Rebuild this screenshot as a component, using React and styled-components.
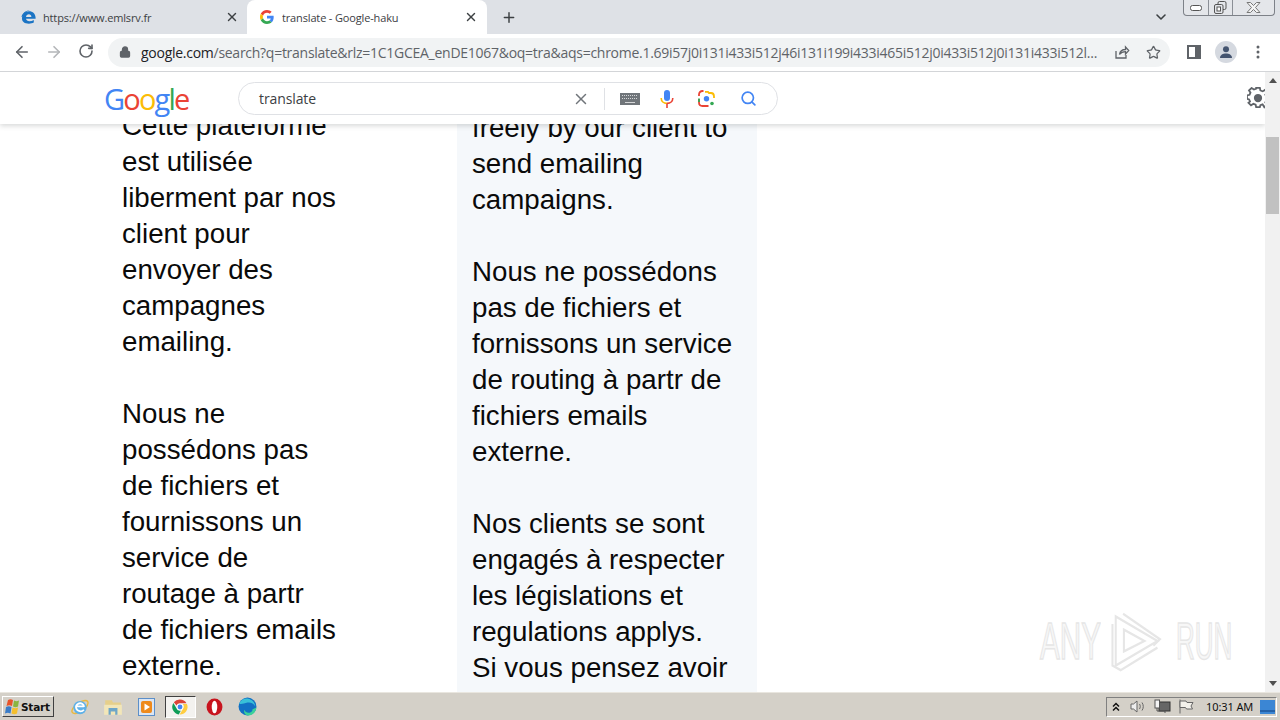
import React from "react";
import styled, { createGlobalStyle } from "styled-components";
import { ArrowLeft, ArrowRight, RotateCw, Lock, Star, X, Plus, ChevronDown, Search } from "lucide-react";

const Global = createGlobalStyle`
  html, body { margin: 0; padding: 0; background: #fff; overflow: hidden; }
  #root { width: 1280px; height: 720px; }
`;

const Screen = styled.div`
  width: 1280px; height: 720px; display: flex; flex-direction: column; overflow: hidden; position: relative;
  font-family: "Open Sans", "Liberation Sans", sans-serif;
`;

const TabStrip = styled.div`
  height: 34px; flex: none; background: #dee1e6; display: flex; align-items: stretch; padding-left: 8px; box-sizing: border-box;
`;
const Tab = styled.div`
  width: ${p => p.$w}px; margin-right: ${p => p.$mr || 0}px; flex: none; display: flex; align-items: center; box-sizing: border-box;
  padding-left: ${p => p.$pl}px; padding-right: ${p => p.$pr}px; border-radius: 8px 8px 0 0; background: ${p => p.$active ? "#fff" : "transparent"};
  color: #3c4043; font-size: 11px; letter-spacing: -0.15px; white-space: nowrap;
`;
const TabIcon = styled.span`
  width: 16px; height: 16px; display: flex; align-items: center; justify-content: center; margin-right: ${p => p.$mr}px; flex: none;
`;
const TabTitle = styled.span`
  flex: 1; overflow: hidden;
`;
const NewTab = styled.div`
  width: 16px; display: flex; align-items: center; justify-content: center; margin-left: 14px; color: #3c4043;
`;
const StripRight = styled.div`
  margin-left: auto; display: flex; align-items: flex-start; 
`;
const ListTabs = styled.div`
  margin-top: 9px; margin-right: 14px; color: #3c4043; display: flex;
`;
const WinControls = styled.div`
  width: 92px; height: 16px; margin-right: 5px; display: grid; grid-template-columns: 25px 24px 1fr; box-sizing: border-box;
  border: 1px solid #7d8188; border-top: none; border-radius: 0 0 4px 4px; background: #e4e6ea;
`;
const WinButton = styled.div`
  display: flex; align-items: center; justify-content: center; border-right: ${p => p.$last ? "none" : "1px solid #8b8f96"};
`;

const Toolbar = styled.div`
  height: 38px; flex: none; background: #fff; border-bottom: 1px solid #d3d5d8; box-sizing: border-box; display: flex; align-items: center; padding-bottom: 1px;
`;
const NavButton = styled.div`
  width: 32px; display: flex; justify-content: center; color: ${p => p.$off ? "#b4b6b9" : "#5f6368"}; flex: none;
`;
const NavGroup = styled.div`
  display: flex; padding-left: 6px; 
`;
const Omnibox = styled.div`
  margin-left: 6px; width: 1062px; height: 29px; flex: none; background: #f1f3f4; border-radius: 15px; display: flex; align-items: center; padding-left: 11px; box-sizing: border-box;
`;
const Url = styled.div`
  margin-left: 10px; width: 958px; font-size: 14px; letter-spacing: -0.27px; white-space: nowrap; overflow: hidden; color: #5f6368; flex: none;
  b { font-weight: 400; color: #202124; }
`;
const OmniIcon = styled.span`
  display: flex; color: #5f6368; margin-left: ${p => p.$ml}px; flex: none;
`;
const ProfileDot = styled.span`
  width: 22px; height: 22px; border-radius: 50%; background: #d5d9e0; display: flex; align-items: center; justify-content: center; overflow: hidden;
`;
const ToolEnd = styled.div`
  display: flex; align-items: center; margin-left: 17px;
`;

const Main = styled.div`
  flex: 1; min-height: 0; display: flex;
`;
const PageArea = styled.div`
  flex: 1; min-width: 0; display: flex; flex-direction: column; overflow: hidden; 
`;
const SearchHeader = styled.div`
  height: 52px; flex: none; background: #fff; box-shadow: 0 2px 5px rgba(60,64,67,.2); position: relative; z-index: 2; display: flex; align-items: center; padding-left: 104px; box-sizing: border-box; overflow: hidden;
`;
const Logo = styled.div`
  width: 134px; flex: none; font-family: "Open Sans", sans-serif; font-weight: 500; font-size: 29px; letter-spacing: -1.800px; line-height: 1; margin-top: 1px;
`;
const Letter = styled.span`
  color: ${p => p.$c};
`;
const SearchBox = styled.div`
  width: 540px; height: 33px; margin-top: 1px; flex: none; border: 1px solid #dfe1e5; border-radius: 17px; box-sizing: border-box; display: flex; align-items: center; padding-left: 20px; background: #fff;
`;
const Query = styled.div`
  width: 305px; flex: none; font-size: 14px; letter-spacing: -0.1px; color: #3c4043; 
`;
const BoxIcon = styled.span`
  display: flex; flex: none; margin-left: ${p => p.$ml}px; color: ${p => p.$c || "#70757a"};
`;
const BoxDivider = styled.span`
  width: 1px; height: 22px; background: #dfe1e5; flex: none; margin-left: 14px;
`;
const Gear = styled.span`
  display: flex; flex: none; margin-left: 469px; color: #5f6368;
`;

const Columns = styled.div`
  flex: 1; min-height: 0; display: flex; align-items: flex-start; background: #fff; overflow: hidden;
`;
const LeftCol = styled.div`
  width: 457px; flex: none; box-sizing: border-box; padding-left: 122px; margin-top: -16px;
`;
const RightCol = styled.div`
  width: 300px; height: 600px; flex: none; box-sizing: border-box; padding-left: 15px; margin-top: -14px; background: #f5f8fb;
`;
const Line = styled.div`
  font-family: "Liberation Sans", Arial, sans-serif; font-size: 27.700px; line-height: 36px; height: 36px; color: #0a0a0a; white-space: nowrap;
`;

const Scrollbar = styled.div`
  width: 15px; flex: none; background: #f1f1f1; display: flex; flex-direction: column; align-items: center; position: relative; z-index: 3; justify-content: space-between; padding: 6px 0; box-sizing: border-box;
`;
const Thumb = styled.div`
  position: absolute; top: 65px; left: 1px; width: 13px; height: 77px; background: #c1c1c1;
`;

const Taskbar = styled.div`
  height: 28px; flex: none; background: #d4d0c8; border-top: 1px solid #e9e6df; box-sizing: border-box; display: flex; align-items: center; position: relative; z-index: 4;
`;
const StartButton = styled.div`
  width: 52px; height: 21px; margin-left: 2px; flex: none; box-sizing: border-box; display: flex; align-items: center; gap: 0; padding-left: 1px;
  border: 1px solid; border-color: #fff #404040 #404040 #fff; background: #d4d0c8; font-family: "DejaVu Sans", sans-serif; font-weight: 700; font-size: 10.500px; color: #111; letter-spacing: -0.2px;
`;
const QuickLaunch = styled.div`
  display: flex; align-items: center; margin-left: 9px;
`;
const Launch = styled.div`
  width: 33.500px; height: 22px; display: flex; align-items: center; justify-content: center; flex: none; box-sizing: border-box;
  ${p => p.$active && `background:#f3f2ef; border:1px solid; border-color:#404040 #fff #fff #404040; width:31px; margin:0 2px 0 1px;`}
`;
const Tray = styled.div`
  margin-left: auto; margin-right: 3px; width: 171px; height: 20px; box-sizing: border-box; flex: none; display: flex; align-items: center; border: 1px solid; border-color: #808080 #fff #fff #808080; padding-left: 5px;
`;
const TrayIcon = styled.span`
  display: flex; margin-left: ${p => p.$ml || 0}px; flex: none;
`;
const Clock = styled.span`
  font-family: "Noto Sans", sans-serif; font-size: 11px; color: #111; margin-left: 11px; white-space: nowrap; flex: none; letter-spacing: -0.1px;
`;

const Watermark = styled.div`
  position: absolute; left: 1040px; top: 608px; display: flex; align-items: center; height: 66px; pointer-events: none; z-index: 1;
`;
const MarkText = styled.span`
  font-family: "Liberation Sans", sans-serif; font-size: 52px; transform: scaleX(${p => p.$sx}); transform-origin: left center; color: #f7f7f7;
  -webkit-text-stroke: 1.500px #e6e6e6; width: ${p => p.$w}px; flex: none; display: block; line-height: 1;
`;
const PlayWrap = styled.span`
  display: flex; flex: none; margin-right: 12px;
`;

const GIcon = ({ s = 14 }) => (
  <svg width={s} height={s} viewBox="0 0 48 48">
    <path fill="#EA4335" d="M24 9.500c3.500 0 6.600 1.200 9.100 3.600l6.800-6.800C35.800 2.400 30.400 0 24 0 14.600 0 6.500 5.400 2.600 13.200l7.900 6.200C12.400 13.600 17.700 9.500 24 9.500z"/>
    <path fill="#4285F4" d="M46.900 24.500c0-1.600-.1-3.100-.4-4.500H24v9h12.900c-.6 3-2.200 5.500-4.800 7.200l7.700 6c4.500-4.200 7.100-10.300 7.100-17.700z"/>
    <path fill="#FBBC05" d="M10.500 28.600c-.5-1.400-.8-3-.8-4.600s.3-3.200.8-4.600l-7.900-6.200C.9 16.500 0 20.100 0 24s.9 7.500 2.600 10.800l7.900-6.200z"/>
    <path fill="#34A853" d="M24 48c6.500 0 11.900-2.100 15.900-5.800l-7.700-6c-2.200 1.400-4.900 2.300-8.200 2.300-6.300 0-11.600-4.200-13.500-9.900l-7.900 6.200C6.500 42.600 14.600 48 24 48z"/>
  </svg>
);
const EdgeTabIcon = () => (
  <svg width="16" height="14" viewBox="0 0 16 14">
    <path fill="#1b74c4" d="M1 8.500C1 4 4 1.200 8 1.200c3.800 0 6.600 2.600 6.600 6.600v1H5c.3 1.700 1.600 2.400 3.400 2.400 1.600 0 3-.4 4.400-1.200v2.600c-1.400.8-3 1.100-4.900 1.100C3.600 13.700 1 11.800 1 8.500zm4-1.600h5.400C10.300 5.300 9.400 4.200 7.900 4.200 6.300 4.200 5.300 5.300 5 6.900z"/>
    <path fill="#1b74c4" d="M.4 7C1.500 3 5 .3 9 .6 6 1 3 3 1.600 6.500z"/>
  </svg>
);
const SharedIcon = () => (
  <svg width="16" height="16" viewBox="0 0 16 16" fill="none" stroke="#5f6368" strokeWidth="1.300">
    <path d="M2 7v7h10v-3" />
    <path d="M5.500 10.500c.5-3 2.600-5 6-5V3l3.200 3.600L11.500 10V7.600c-2.500 0-4.600.8-6 2.900z" />
  </svg>
);
const SidePanel = () => (
  <svg width="14" height="14" viewBox="0 0 14 14">
    <path fill="#5f6368" fillRule="evenodd" d="M0 0h14v14H0zM2 2v10h6V2z" />
  </svg>
);
const Person = () => (
  <svg width="16" height="16" viewBox="0 0 16 16" fill="#44546f">
    <circle cx="8" cy="5.200" r="3" />
    <path d="M2 14c0-3 3-4.400 6-4.400s6 1.400 6 4.400z" />
  </svg>
);
const Kebab = () => (
  <svg width="4" height="14" viewBox="0 0 4 14" fill="#5f6368">
    <circle cx="2" cy="2" r="1.500" /><circle cx="2" cy="7" r="1.500" /><circle cx="2" cy="12" r="1.500" />
  </svg>
);
const Keyboard = () => (
  <svg width="20" height="12" viewBox="0 0 20 12">
    <rect width="20" height="12" fill="#70757a" />
    <path stroke="#d5d6d8" strokeWidth="1" strokeDasharray="1 1" d="M2 2.500h16M2 5.500h16" />
    <path stroke="#d5d6d8" strokeWidth="1" d="M5 9.500h10" />
  </svg>
);
const Mic = () => (
  <svg width="14" height="18" viewBox="0 0 14 18" fill="none">
    <rect x="4" y="0" width="6" height="11" rx="3" fill="#4285f4" />
    <path d="M1.200 8c0 3.300 2.400 5.400 5.800 5.400" stroke="#fbbc05" strokeWidth="1.600" />
    <path d="M12.800 8c0 3.300-2.400 5.400-5.800 5.400" stroke="#ea4335" strokeWidth="1.600" />
    <path d="M7 13.400V18" stroke="#ea4335" strokeWidth="1.600" />
  </svg>
);
const LensIcon = () => (
  <svg width="17" height="17" viewBox="0 0 17 17" fill="none" strokeWidth="1.800">
    <path d="M1 6V4.500C1 2.500 2.500 1 4.500 1H5.500" stroke="#ea4335" />
    <path d="M7 1.800L10 1.800L11 3H13C14.500 3 16 4 16 6.500V8" stroke="#fbbc05" />
    <path d="M1 9v3.500C1 14.500 2.500 16 4.500 16h6" stroke="#ea4335" />
    <path d="M1 8.500v3.500" stroke="#34a853" />
    <circle cx="8.500" cy="8.800" r="2.700" fill="#4285f4" stroke="none" />
    <circle cx="14" cy="13.500" r="1.800" fill="#34a853" stroke="none" />
  </svg>
);
const GearIcon = () => (
  <svg width="22" height="22" viewBox="0 0 24 24" fill="none" stroke="#5f6368" strokeWidth="2">
    <path d="M10 2h4l.6 3 2.400 1 2.600-1.700 2.800 2.800L20 9.700l1 2.300 3 .6v3l-3 .6-1 2.400 1.700 2.600-2.800 2.800L17 20.800l-2.400 1L14 24h-4l-.6-2.800-2.400-1-2.600 1.700-2.800-2.800L3.300 17.500l-1-2.400L0 14.500v-4l2.800-.6 1-2.400L2.200 5l2.800-2.800 2.600 1.700L10 3z" transform="translate(0 -1) scale(1 .96)"/>
    <circle cx="12" cy="12" r="3.500" fill="#5f6368" />
  </svg>
);
const MinIcon = () => <svg width="12" height="6" viewBox="0 0 12 6"><rect x=".5" y=".5" width="11" height="5" rx="2" fill="#fff" stroke="#555" /></svg>;
const RestoreIcon = () => (
  <svg width="13" height="13" viewBox="0 0 13 13" fill="#e4e6ea" stroke="#555">
    <rect x="4" y=".5" width="8" height="8" rx="1.500" /><rect x=".5" y="3.500" width="8.500" height="9" rx="1.500" /><rect x="3" y="6" width="3.500" height="4" fill="#fff" />
  </svg>
);
const CloseGlyph = () => (
  <svg width="15" height="11" viewBox="0 0 15 11" fill="#f4f4f4" stroke="#777">
    <path d="M1 .5h3.500l3 3 3-3H14l-4.500 5L14 10.500h-3.500l-3-3-3 3H1l4.500-5z" />
  </svg>
);
const WinFlag = () => (
  <svg width="17" height="16" viewBox="0 0 17 16">
    <path fill="#e8542a" d="M4 1c2-1 3-1 5 0L8 7C6 6 4.500 6 2.500 7z"/>
    <path fill="#8ab53f" d="M10 1.500c2 1 3 1 5 0l-1 6c-2 1-3 1-5 0z"/>
    <path fill="#3a7cc8" d="M2 8c2-1 3.500-1 5.500 0L6.500 14.500c-2-1-3.500-1-5.500 0z"/>
    <path fill="#f5bf2c" d="M8.500 8.500c2 1 3.500 1 5.500 0l-1 6c-2 1-3.500 1-5.500 0z"/>
  </svg>
);
const IEIcon = () => (
  <svg width="20" height="20" viewBox="0 0 18 18" fill="none">
    <ellipse cx="9" cy="9" rx="8.500" ry="3.800" transform="rotate(-35 9 9)" stroke="#e9b840" strokeWidth="1.300" />
    <circle cx="9" cy="9.500" r="6" fill="#5fb1e8" />
    <path d="M5.500 8.500h7M12.500 11.500c-1.800 2.200-6 1.800-7-1.500-.8-3 3-5.500 5.700-3.700 1 .7 1.400 1.500 1.400 2.700" stroke="#fff" strokeWidth="1.600" />
  </svg>
);
const FolderIcon = () => (
  <svg width="20" height="20" viewBox="0 0 18 18">
    <path fill="#e6cf8a" d="M2 3h6l1 2h7v3H2z"/>
    <path fill="#f2e6b8" d="M1 7h16v9H1z"/>
    <path fill="#6ea6c8" d="M5 10h8v6h-2v-3H7v3H5z"/>
  </svg>
);
const MediaIcon = () => (
  <svg width="17" height="18" viewBox="0 0 17 18">
    <rect x=".5" y=".5" width="16" height="17" fill="#dbe6f4" stroke="#5c8fc9" />
    <rect x="3" y="3" width="11" height="12" rx="2" fill="#ee8a1c" />
    <path fill="#fff" d="M6.500 5.500v7l5.500-3.500z" />
  </svg>
);
const ChromeIcon = () => (
  <svg width="18" height="18" viewBox="0 0 48 48">
    <path fill="#db4437" d="M24 4a20 20 0 0 1 17.300 10H24a10 10 0 0 0-9.300 6.300L7.500 11.400A20 20 0 0 1 24 4z"/>
    <path fill="#0f9d58" d="M6.400 13l8.500 14.800A10 10 0 0 0 26 33.800L20.700 43.700A20 20 0 0 1 6.400 13z"/>
    <path fill="#ffcd40" d="M42.500 16A20 20 0 0 1 23 44l8.700-15a10 10 0 0 0-.3-13z"/>
    <circle cx="24" cy="24" r="8.500" fill="#fff"/><circle cx="24" cy="24" r="6.500" fill="#4285f4"/>
  </svg>
);
const OperaIcon = () => (
  <svg width="17" height="18" viewBox="0 0 16 17">
    <ellipse cx="8" cy="8.500" rx="7.500" ry="8" fill="#c8141e"/>
    <ellipse cx="8" cy="8.500" rx="2.600" ry="6" fill="#fff"/>
  </svg>
);
const EdgeIcon = () => (
  <svg width="19" height="19" viewBox="0 0 17 17">
    <circle cx="8.500" cy="8.500" r="8" fill="#1270c4"/>
    <path fill="#3ad19a" d="M16.500 9.500C16 13.500 13 16.500 9.500 16.500c-3 0-4.500-2.500-4-5 1 2 3 3 5 2.500 2-.5 2.500-2 2.500-3z"/>
    <path fill="#38c0d8" d="M1 6c1.500-3.500 5-5 8-4.500 3.500.6 6 3 6.500 7-1.500-2.700-4-4-7-3.500C5.500 5.500 3 7 1 6z"/>
  </svg>
);
const ChevUp = () => (
  <svg width="8" height="10" viewBox="0 0 8 10" fill="none" stroke="#111" strokeWidth="1.500"><path d="M1 4.500l3-3 3 3M1 8.500l3-3 3 3"/></svg>
);
const Speaker = () => (
  <svg width="17" height="15" viewBox="0 0 17 15" fill="none" stroke="#666"><path d="M1 5h2.500L7 2v11L3.500 10H1z" fill="#eee"/><path d="M9.500 5c1 1.500 1 3.500 0 5M12 3.500c1.700 2.500 1.700 5.500 0 8"/></svg>
);
const Network = () => (
  <svg width="17" height="15" viewBox="0 0 17 15"><rect x="5" y="3" width="11" height="9" fill="#666" stroke="#333"/><rect x="1" y="1" width="4.500" height="8" fill="#f4f4f4" stroke="#555"/><path d="M3 9v3h8v2" stroke="#555" fill="none"/></svg>
);
const FlagIcon = () => (
  <svg width="17" height="15" viewBox="0 0 17 15" fill="#f3f1eb" stroke="#666"><path d="M2 .500v14" /><path d="M2 2h6l1 1.500h6L13 7l1.500 3H8.500l-1-1.500H2z" /></svg>
);
const DesktopIcon = () => (
  <svg width="15" height="14" viewBox="0 0 15 14"><rect width="15" height="14" fill="#3b86d4"/><rect y="10" width="15" height="2" fill="#2461a8"/></svg>
);
const PlayMark = () => (
  <svg width="54" height="64" viewBox="0 0 66 68" preserveAspectRatio="none" fill="none" stroke="#e6e6e6" strokeWidth="2.500">
    <path d="M7 60V8L58 34z" />
    <path d="M16 5l45 27-8 7M3 16v44l10 5 45-24" />
    <path d="M17 45V22l25 12z" />
  </svg>
);
const Arrow = ({ up }) => (
  <svg width="8" height="5" viewBox="0 0 8 5" fill="#505050"><path d={up ? "M4 0l4 5H0z" : "M0 0h8L4 5z"} /></svg>
);

const leftLines = ["Cette plateforme", "est utilisée", "liberment par nos", "client pour", "envoyer des", "campagnes", "emailing.", "", "Nous ne", "possédons pas", "de fichiers et", "fournissons un", "service de", "routage à partr", "de fichiers emails", "externe."];
const rightLines = ["freely by our client to", "send emailing", "campaigns.", "", "Nous ne possédons", "pas de fichiers et", "fornissons un service", "de routing à partr de", "fichiers emails", "externe.", "", "Nos clients se sont", "engagés à respecter", "les législations et", "regulations applys.", "Si vous pensez avoir"];

const logo = [["G", "#4285f4"], ["o", "#ea4335"], ["o", "#fbbc05"], ["g", "#4285f4"], ["l", "#34a853"], ["e", "#ea4335"]];

export default function App() {
  return (
    <Screen>
      <Global />
      <TabStrip>
        <Tab $w={232} $mr={7} $pl={13} $pr={1}>
          <TabIcon $mr={6}><EdgeTabIcon /></TabIcon>
          <TabTitle>https://www.emlsrv.fr</TabTitle>
          <X size={14} strokeWidth={2.4} />
        </Tab>
        <Tab $w={240} $active $pl={12} $pr={9}>
          <TabIcon $mr={7}><GIcon /></TabIcon>
          <TabTitle>translate - Google-haku</TabTitle>
          <X size={14} strokeWidth={2.4} />
        </Tab>
        <NewTab><Plus size={17} strokeWidth={2.2} /></NewTab>
        <StripRight>
          <ListTabs><ChevronDown size={16} strokeWidth={2.4} /></ListTabs>
          <WinControls>
            <WinButton><MinIcon /></WinButton>
            <WinButton><RestoreIcon /></WinButton>
            <WinButton $last><CloseGlyph /></WinButton>
          </WinControls>
        </StripRight>
      </TabStrip>
      <Toolbar>
        <NavGroup>
          <NavButton><ArrowLeft size={18} strokeWidth={2.2} /></NavButton>
          <NavButton $off><ArrowRight size={18} strokeWidth={2.2} /></NavButton>
          <NavButton><RotateCw size={16} strokeWidth={2.4} /></NavButton>
        </NavGroup>
        <Omnibox>
          <OmniIcon $ml={0}><Lock size={12} strokeWidth={2.6} fill="#5f6368" /></OmniIcon>
          <Url><b>google.com</b>/search?q=translate&amp;rlz=1C1GCEA_enDE1067&amp;oq=tra&amp;aqs=chrome.1.69i57j0i131i433i512j46i131i199i433i465i512j0i433i512j0i131i433i512l...</Url>
          <OmniIcon $ml={15}><SharedIcon /></OmniIcon>
          <OmniIcon $ml={16}><Star size={15} strokeWidth={2} /></OmniIcon>
        </Omnibox>
        <ToolEnd>
          <SidePanel />
          <OmniIcon $ml={14}><ProfileDot><Person /></ProfileDot></OmniIcon>
          <OmniIcon $ml={19}><Kebab /></OmniIcon>
        </ToolEnd>
      </Toolbar>
      <Main>
        <PageArea>
          <SearchHeader>
            <Logo>{logo.map(([l, c], i) => <Letter key={i} $c={c}>{l}</Letter>)}</Logo>
            <SearchBox>
              <Query>translate</Query>
              <BoxIcon $ml={8}><X size={18} strokeWidth={2} /></BoxIcon>
              <BoxDivider />
              <BoxIcon $ml={15}><Keyboard /></BoxIcon>
              <BoxIcon $ml={20}><Mic /></BoxIcon>
              <BoxIcon $ml={24}><LensIcon /></BoxIcon>
              <BoxIcon $ml={25} $c="#4285f4"><Search size={17} strokeWidth={2.4} /></BoxIcon>
            </SearchBox>
            <Gear><GearIcon /></Gear>
          </SearchHeader>
          <Columns>
            <LeftCol>{leftLines.map((t, i) => <Line key={i}>{t}</Line>)}</LeftCol>
            <RightCol>{rightLines.map((t, i) => <Line key={i}>{t}</Line>)}</RightCol>
          </Columns>
        </PageArea>
        <Scrollbar>
          <Arrow up />
          <Thumb />
          <Arrow />
        </Scrollbar>
      </Main>
      <Watermark>
        <MarkText $w={70} $sx={0.57}>ANY</MarkText>
        <PlayWrap><PlayMark /></PlayWrap>
        <MarkText $w={58} $sx={0.5}>RUN</MarkText>
      </Watermark>
      <Taskbar>
        <StartButton><WinFlag />Start</StartButton>
        <QuickLaunch>
          <Launch><IEIcon /></Launch>
          <Launch><FolderIcon /></Launch>
          <Launch><MediaIcon /></Launch>
          <Launch $active><ChromeIcon /></Launch>
          <Launch><OperaIcon /></Launch>
          <Launch><EdgeIcon /></Launch>
        </QuickLaunch>
        <Tray>
          <TrayIcon><ChevUp /></TrayIcon>
          <TrayIcon $ml={10}><Speaker /></TrayIcon>
          <TrayIcon $ml={7}><Network /></TrayIcon>
          <TrayIcon $ml={7}><FlagIcon /></TrayIcon>
          <Clock>10:31 AM</Clock>
          <TrayIcon $ml={7}><DesktopIcon /></TrayIcon>
        </Tray>
      </Taskbar>
    </Screen>
  );
}
